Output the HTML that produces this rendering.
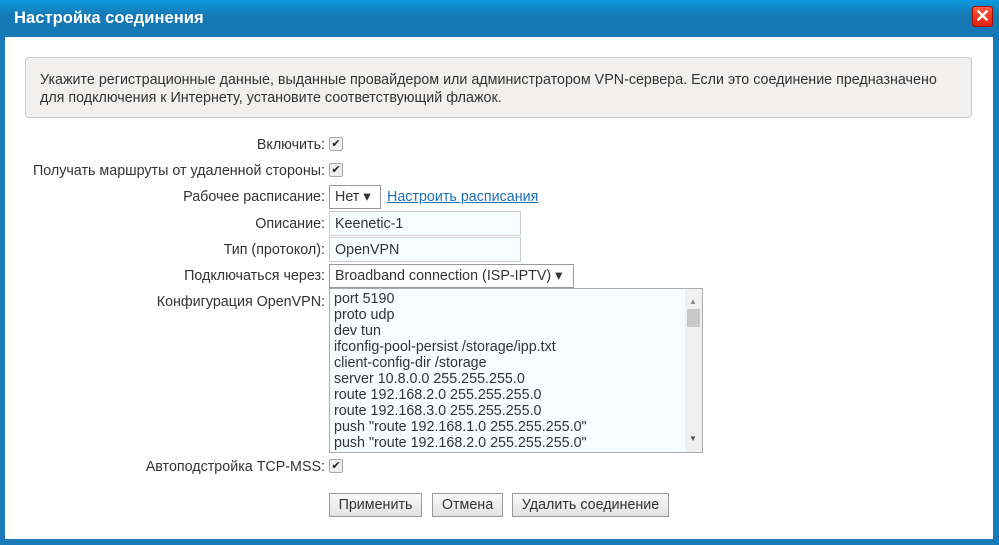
<!DOCTYPE html><html><head><meta charset="utf-8"><style>
*{box-sizing:border-box}body{margin:0;width:999px;height:545px;background:#1a7ab8;font-family:"Liberation Sans",sans-serif;font-size:14.3px;color:#333;position:relative;overflow:hidden}
.title{position:absolute;left:0;top:0;width:999px;height:37px;background:linear-gradient(#0b9ae0,#1679b5 40%,#1679b5);}
.title span{position:absolute;left:14px;top:8px;color:#fff;font-weight:bold;font-size:16.6px}
.x{position:absolute;left:972px;top:6px;width:21px;height:21px;background:linear-gradient(#ff5a3a,#e0200c);border:1px solid #a01000;border-radius:3px;color:#fff;font-size:18px;line-height:19px;text-align:center;font-weight:bold}
.main{position:absolute;left:5px;top:37px;width:988px;height:502px;background:#fff}
.a{position:absolute}
.info{left:25px;top:57px;width:947px;height:61px;background:#f1f0ee;border:1px solid #ccc;border-radius:4px;padding:13px 10px 12px 14px;line-height:18px;color:#333}
.lbl{position:absolute;right:674px;white-space:nowrap}
.cb{position:absolute;left:329px;width:14px;height:14px;border:1px solid #aaa;border-radius:2px;background:#eee;font-size:11px;line-height:12px;text-align:center;color:#222}
.inp{position:absolute;left:329px;width:192px;height:25px;border:1px solid #ccc;background:#f7fdff;padding:4px 5px}
.sel{position:absolute;left:329px;border:1px solid #999;background:#fff;padding:3px 5px;height:24px;white-space:nowrap}
.ta{left:329px;top:288px;width:374px;height:165px;border:1px solid #aaa;background:#f5fdff;padding:2px 4px;line-height:16px;white-space:pre;overflow:hidden}
.sb{position:absolute;right:0;top:0;width:17px;height:163px;background:#f0f0f0}
.btn{position:absolute;top:493px;height:24px;border:1px solid #999;background:linear-gradient(#fafafa,#e2e2e2);padding:3px 0;text-align:center;white-space:nowrap}
</style></head><body>
<div class="title"><span>Настройка соединения</span></div><div class="x">✕</div>
<div class="main"></div>
<div class="a info">Укажите регистрационные данные, выданные провайдером или администратором VPN-сервера. Если это соединение предназначено для подключения к Интернету, установите соответствующий флажок.</div>
<div class="lbl" style="top:137px">Включить:</div><div class="cb" style="top:137px">✔</div>
<div class="lbl" style="top:163px">Получать маршруты от удаленной стороны:</div><div class="cb" style="top:163px">✔</div>
<div class="lbl" style="top:189px">Рабочее расписание:</div><div class="sel" style="top:185px;width:52px">Нет ▾</div>
<div class="a" style="left:387px;top:189px;color:#1a6fb5;text-decoration:underline">Настроить расписания</div>
<div class="lbl" style="top:216px">Описание:</div><div class="inp" style="top:211px">Keenetic-1</div>
<div class="lbl" style="top:242px">Тип (протокол):</div><div class="inp" style="top:237px">OpenVPN</div>
<div class="lbl" style="top:268px">Подключаться через:</div><div class="sel" style="top:264px;width:245px">Broadband connection (ISP-IPTV) ▾</div>
<div class="lbl" style="top:294px">Конфигурация OpenVPN:</div>
<div class="a ta">port 5190
proto udp
dev tun
ifconfig-pool-persist /storage/ipp.txt
client-config-dir /storage
server 10.8.0.0 255.255.255.0
route 192.168.2.0 255.255.255.0
route 192.168.3.0 255.255.255.0
push "route 192.168.1.0 255.255.255.0"
push "route 192.168.2.0 255.255.255.0"<div class="sb"><div style="position:absolute;left:2px;top:20px;width:13px;height:18px;background:#c8c8c8"></div><div style="position:absolute;left:4px;top:5px;font-size:8px;color:#888">▲</div><div style="position:absolute;left:4px;bottom:5px;font-size:8px;color:#555">▼</div></div></div>
<div class="lbl" style="top:459px">Автоподстройка TCP-MSS:</div><div class="cb" style="top:459px">✔</div>
<div class="btn" style="left:329px;width:93px">Применить</div>
<div class="btn" style="left:432px;width:71px">Отмена</div>
<div class="btn" style="left:512px;width:157px">Удалить соединение</div>
</body></html>
